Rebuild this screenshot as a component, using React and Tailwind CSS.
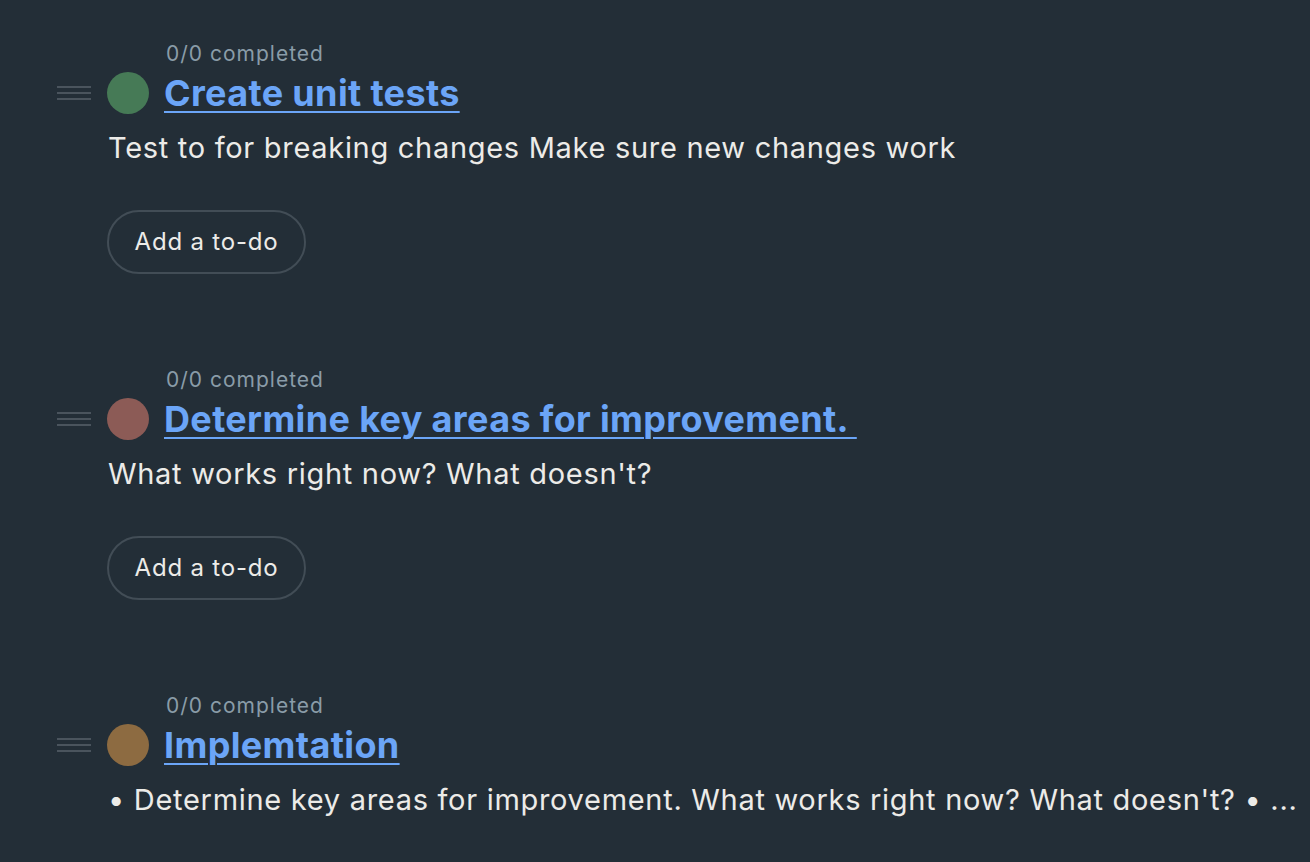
const tasks = [
  {
    title: "Create unit tests",
    color: "bg-[#467a56]",
    body: "Test to for breaking changes Make sure new changes work",
  },
  {
    title: "Determine key areas for improvement. ",
    color: "bg-[#8c5b56]",
    body: "What works right now? What doesn't?",
  },
  {
    title: "Implemtation",
    color: "bg-[#8d6b41]",
    body: "• Determine key areas for improvement. What works right now? What doesn't? • ...",
  },
];

function DragHandle() {
  return (
    <div className="flex w-[34px] flex-col gap-[4px]">
      <span className="h-[2px] w-full bg-[#4a545d]" />
      <span className="h-[2px] w-full bg-[#4a545d]" />
      <span className="h-[2px] w-full bg-[#4a545d]" />
    </div>
  );
}

function TaskSection({ task }) {
  return (
    <section className="pb-[94px]">
      <div className="pl-[109px] text-[21px] leading-[24px] tracking-[1px] text-[#8a9ca8]">
        0/0 completed
      </div>
      <div className="mt-[6px] flex h-[42px] items-center">
        <DragHandle />
        <span className={`ml-[16px] h-[42px] w-[42px] shrink-0 rounded-full ${task.color}`} />
        <a
          href="#"
          className="ml-[15px] whitespace-pre text-[36px] font-bold leading-[42px] tracking-[0.35px] text-[#6ba5f7] underline decoration-[2px] underline-offset-[5px]"
        >
          {task.title}
        </a>
      </div>
      <p className="ml-[51px] mt-[14px] whitespace-nowrap text-[29px] leading-[40px] tracking-[0.7px] text-[#ecebe8]">
        {task.body}
      </p>
      <button className="ml-[50px] mt-[42px] flex h-[64px] w-[199px] items-center justify-center rounded-full border-2 border-[#424d56] text-[24px] tracking-[0.8px] text-[#ecebe8]">
        Add a to-do
      </button>
    </section>
  );
}

export default function App() {
  return (
    <div
      className="h-[862px] overflow-hidden bg-[#232e37] pl-[57px] pt-[42px]"
      style={{ fontFamily: "Inter, 'Noto Sans', sans-serif" }}
    >
      {tasks.map((task) => (
        <TaskSection key={task.title} task={task} />
      ))}
    </div>
  );
}
